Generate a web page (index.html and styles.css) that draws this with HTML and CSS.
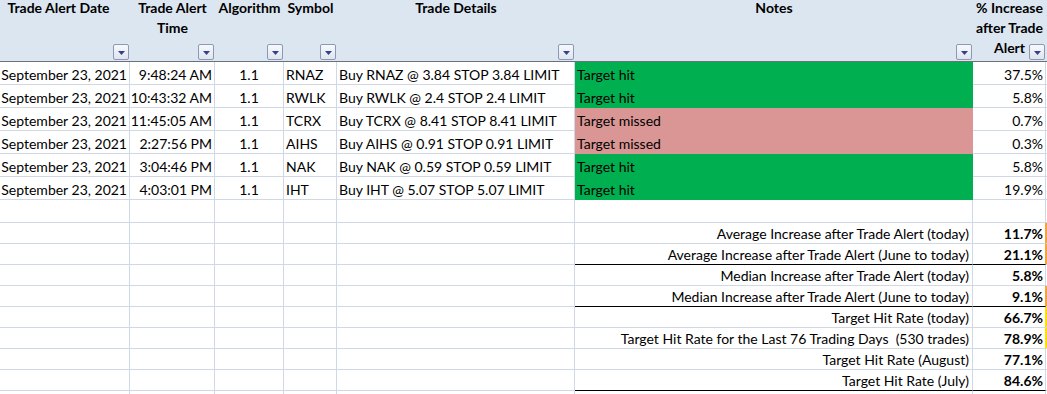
FILE: index.html
```html
<!DOCTYPE html>
<html lang="en">
<head>
<meta charset="utf-8">
<title>Trade Alerts</title>
<link rel="stylesheet" href="styles.css">
</head>
<body>
<div class="sheet">
  <div class="row hdr">
    <div class="h first"><span class="ht">Trade Alert Date</span><span class="fb"><svg width="7" height="4" viewBox="0 0 7 4"><path d="M0 0H7L3.5 4Z"/></svg></span></div>
    <div class="h"><span class="ht">Trade Alert<br>Time</span><span class="fb"><svg width="7" height="4" viewBox="0 0 7 4"><path d="M0 0H7L3.5 4Z"/></svg></span></div>
    <div class="h"><span class="ht">Algorithm</span><span class="fb"><svg width="7" height="4" viewBox="0 0 7 4"><path d="M0 0H7L3.5 4Z"/></svg></span></div>
    <div class="h"><span class="ht">Symbol</span><span class="fb"><svg width="7" height="4" viewBox="0 0 7 4"><path d="M0 0H7L3.5 4Z"/></svg></span></div>
    <div class="h"><span class="ht">Trade Details</span><span class="fb"><svg width="7" height="4" viewBox="0 0 7 4"><path d="M0 0H7L3.5 4Z"/></svg></span></div>
    <div class="h"><span class="ht">Notes</span><span class="fb"><svg width="7" height="4" viewBox="0 0 7 4"><path d="M0 0H7L3.5 4Z"/></svg></span></div>
    <div class="h"><span class="ht">% Increase<br>after Trade<br>Alert</span><span class="fb"><svg width="7" height="4" viewBox="0 0 7 4"><path d="M0 0H7L3.5 4Z"/></svg></span></div>
    <div class="h"></div>
  </div>

  <div class="row r23">
    <div class="c r">September 23, 2021</div><div class="c r">9:48:24 AM</div><div class="c m">1.1</div><div class="c">RNAZ</div>
    <div class="c">Buy RNAZ @ 3.84 STOP 3.84 LIMIT</div><div class="c g">Target hit</div><div class="c r">37.5%</div><div class="c"></div>
  </div>
  <div class="row r23">
    <div class="c r">September 23, 2021</div><div class="c r">10:43:32 AM</div><div class="c m">1.1</div><div class="c">RWLK</div>
    <div class="c">Buy RWLK @ 2.4 STOP 2.4 LIMIT</div><div class="c g">Target hit</div><div class="c r">5.8%</div><div class="c"></div>
  </div>
  <div class="row r23">
    <div class="c r">September 23, 2021</div><div class="c r">11:45:05 AM</div><div class="c m">1.1</div><div class="c">TCRX</div>
    <div class="c">Buy TCRX @ 8.41 STOP 8.41 LIMIT</div><div class="c p">Target missed</div><div class="c r">0.7%</div><div class="c"></div>
  </div>
  <div class="row r23">
    <div class="c r">September 23, 2021</div><div class="c r">2:27:56 PM</div><div class="c m">1.1</div><div class="c">AIHS</div>
    <div class="c">Buy AIHS @ 0.91 STOP 0.91 LIMIT</div><div class="c p">Target missed</div><div class="c r">0.3%</div><div class="c"></div>
  </div>
  <div class="row r23">
    <div class="c r">September 23, 2021</div><div class="c r">3:04:46 PM</div><div class="c m">1.1</div><div class="c">NAK</div>
    <div class="c">Buy NAK @ 0.59 STOP 0.59 LIMIT</div><div class="c g">Target hit</div><div class="c r">5.8%</div><div class="c"></div>
  </div>
  <div class="row r23">
    <div class="c r">September 23, 2021</div><div class="c r">4:03:01 PM</div><div class="c m">1.1</div><div class="c">IHT</div>
    <div class="c">Buy IHT @ 5.07 STOP 5.07 LIMIT</div><div class="c g">Target hit</div><div class="c r">19.9%</div><div class="c"></div>
  </div>
  <div class="row r23">
    <div class="c"></div><div class="c"></div><div class="c"></div><div class="c"></div>
    <div class="c"></div><div class="c"></div><div class="c"></div><div class="c"></div>
  </div>

  <div class="row r21">
    <div class="c"></div><div class="c"></div><div class="c"></div><div class="c"></div><div class="c"></div>
    <div class="c r lbl">Average Increase after Trade Alert (today)</div><div class="c r b oe">11.7%</div><div class="c o"></div>
  </div>
  <div class="row r21">
    <div class="c"></div><div class="c"></div><div class="c"></div><div class="c"></div><div class="c"></div>
    <div class="c r lbl bb">Average Increase after Trade Alert (June to today)</div><div class="c r b bb oe">21.1%</div><div class="c o"></div>
  </div>
  <div class="row r21">
    <div class="c"></div><div class="c"></div><div class="c"></div><div class="c"></div><div class="c"></div>
    <div class="c r lbl">Median Increase after Trade Alert (today)</div><div class="c r b">5.8%</div><div class="c"></div>
  </div>
  <div class="row r21">
    <div class="c"></div><div class="c"></div><div class="c"></div><div class="c"></div><div class="c"></div>
    <div class="c r lbl bb">Median Increase after Trade Alert (June to today)</div><div class="c r b bb oe">9.1%</div><div class="c o"></div>
  </div>
  <div class="row r21">
    <div class="c"></div><div class="c"></div><div class="c"></div><div class="c"></div><div class="c"></div>
    <div class="c r lbl">Target Hit Rate (today)</div><div class="c r b ye">66.7%</div><div class="c y"></div>
  </div>
  <div class="row r21">
    <div class="c"></div><div class="c"></div><div class="c"></div><div class="c"></div><div class="c"></div>
    <div class="c r lbl">Target Hit Rate for the Last 76 Trading Days&nbsp; (530 trades)</div><div class="c r b ye">78.9%</div><div class="c y"></div>
  </div>
  <div class="row r21">
    <div class="c"></div><div class="c"></div><div class="c"></div><div class="c"></div><div class="c"></div>
    <div class="c r lbl">Target Hit Rate (August)</div><div class="c r b">77.1%</div><div class="c"></div>
  </div>
  <div class="row r21">
    <div class="c"></div><div class="c"></div><div class="c"></div><div class="c"></div><div class="c"></div>
    <div class="c r lbl bb">Target Hit Rate (July)</div><div class="c r b bb">84.6%</div><div class="c"></div>
  </div>
  <div class="row r21">
    <div class="c"></div><div class="c"></div><div class="c"></div><div class="c"></div><div class="c"></div>
    <div class="c"></div><div class="c"></div><div class="c"></div>
  </div>
</div>
</body>
</html>
```

FILE: styles.css
```css
html, body {
  margin: 0;
  padding: 0;
  overflow: hidden;
  background: #ffffff;
}

body {
  font-family: Lato, "Liberation Sans", sans-serif;
  font-size: 14px;
  color: #000000;
}

.sheet {
  width: 1060px;
}

.row {
  display: grid;
  grid-template-columns: 130px 85px 69px 53px 238px 398px 73px 14px;
}

.hdr {
  height: 62px;
  background: #dce6f1;
  border-bottom: 1px solid #6b717c;
  box-sizing: border-box;
}

.h {
  position: relative;
  text-align: center;
  font-weight: 700;
  line-height: 20px;
  white-space: nowrap;
}

.h.first {
  padding-right: 13px;
}

.ht {
  display: block;
  margin-top: -2px;
}

.fb {
  position: absolute;
  right: 1px;
  bottom: 1px;
  width: 16px;
  height: 16px;
  box-sizing: border-box;
  border: 1px solid #8c99b6;
  border-radius: 2px;
  background: linear-gradient(#f7f9fc, #dfe5ee);
  display: flex;
  align-items: center;
  justify-content: center;
  padding-top: 2px;
}

.fb svg {
  display: block;
  fill: #34418a;
}

.r23 { height: 23px; }
.r21 { height: 21px; }

.c {
  box-sizing: border-box;
  border-right: 1px solid #d0d7e5;
  border-bottom: 1px solid #d0d7e5;
  padding: 0 2px;
  display: flex;
  align-items: flex-end;
  justify-content: flex-start;
  white-space: pre;
  overflow: hidden;
  line-height: 18px;
}

.r { justify-content: flex-end; }
.m { justify-content: center; }
.lbl { padding-right: 3px; }
.b { font-weight: 700; }

.g {
  background: #00b050;
  border-color: #00b050;
}

.p {
  background: #da9694;
  border-color: #da9694;
}

.bb { border-bottom-color: #000000; }

.oe { border-right-color: #f3a53a; }
.o { background: #f3a53a; }
.ye { border-right-color: #ffe100; }
.y { background: #ffe100; }
```
